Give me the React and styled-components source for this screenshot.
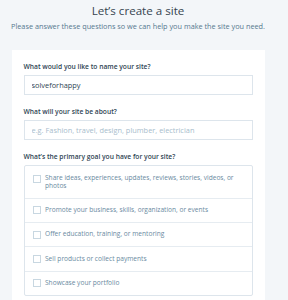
import React from 'react';
import styled, { createGlobalStyle } from 'styled-components';

const Global = createGlobalStyle`
  body {
    margin: 0;
    background: #f3f6f9;
    font-family: 'Open Sans', 'Liberation Sans', sans-serif;
  }
`;

const Page = styled.div`
  width: 276px;
  display: flex;
  flex-direction: column;
  align-items: center;
  padding-top: 3px;
`;

const Title = styled.h1`
  margin: 0;
  font-size: 11.6px;
  font-weight: 400;
  color: #36444f;
  line-height: 16px;
`;

const Subtitle = styled.p`
  margin: 2px 0 0;
  font-size: 7.3px;
  color: #56788f;
  line-height: 10px;
`;

const Card = styled.div`
  box-sizing: border-box;
  width: 253px;
  margin-top: 19px;
  background: #fff;
  padding: 12px 12px 20px;
  display: flex;
  flex-direction: column;
`;

const Label = styled.label`
  font-size: 6.7px;
  font-weight: 600;
  color: #2e4453;
  line-height: 10px;
  margin-bottom: 3px;
`;

const Input = styled.input`
  box-sizing: border-box;
  width: 229px;
  height: 20px;
  border: 1px solid #dde5ec;
  padding: 0 7px;
  font-family: inherit;
  font-size: 7.4px;
  color: #2e4453;
  margin-bottom: 12px;
  outline: none;
  &::placeholder {
    color: #a8bdcc;
  }
`;

const Options = styled.div`
  width: 229px;
  border: 1px solid #dde5ec;
  border-radius: 2px;
  box-sizing: border-box;
  display: flex;
  flex-direction: column;
`;

const Option = styled.div`
  display: flex;
  align-items: ${p => (p.tall ? 'flex-start' : 'center')};
  gap: 4.5px;
  padding: ${p => (p.tall ? '7.5px 8px 7px' : '0 8px')};
  height: ${p => (p.tall ? 'auto' : '24.4px')};
  box-sizing: border-box;
  border-top: ${p => (p.first ? 'none' : '1px solid #e6ecf1')};
`;

const Box = styled.span`
  flex: none;
  width: 8px;
  height: 8px;
  border: 1px solid #c8d7e1;
  box-sizing: border-box;
  background: #fff;
  margin-top: ${p => (p.tall ? '1px' : '0')};
`;

const OptionText = styled.span`
  font-size: 6.6px;
  line-height: 8.5px;
  color: #6a8aa1;
`;

const goals = [
  'Share ideas, experiences, updates, reviews, stories, videos, or photos',
  'Promote your business, skills, organization, or events',
  'Offer education, training, or mentoring',
  'Sell products or collect payments',
  'Showcase your portfolio',
];

export default function App() {
  return (
    <Page>
      <Global />
      <Title>Let’s create a site</Title>
      <Subtitle>Please answer these questions so we can help you make the site you need.</Subtitle>
      <Card>
        <Label>What would you like to name your site?</Label>
        <Input defaultValue="solveforhappy" />
        <Label>What will your site be about?</Label>
        <Input placeholder="e.g. Fashion, travel, design, plumber, electrician" />
        <Label>What’s the primary goal you have for your site?</Label>
        <Options>
          {goals.map((g, i) => (
            <Option key={g} first={i === 0} tall={i === 0}>
              <Box tall={i === 0} />
              <OptionText>{g}</OptionText>
            </Option>
          ))}
        </Options>
      </Card>
    </Page>
  );
}
